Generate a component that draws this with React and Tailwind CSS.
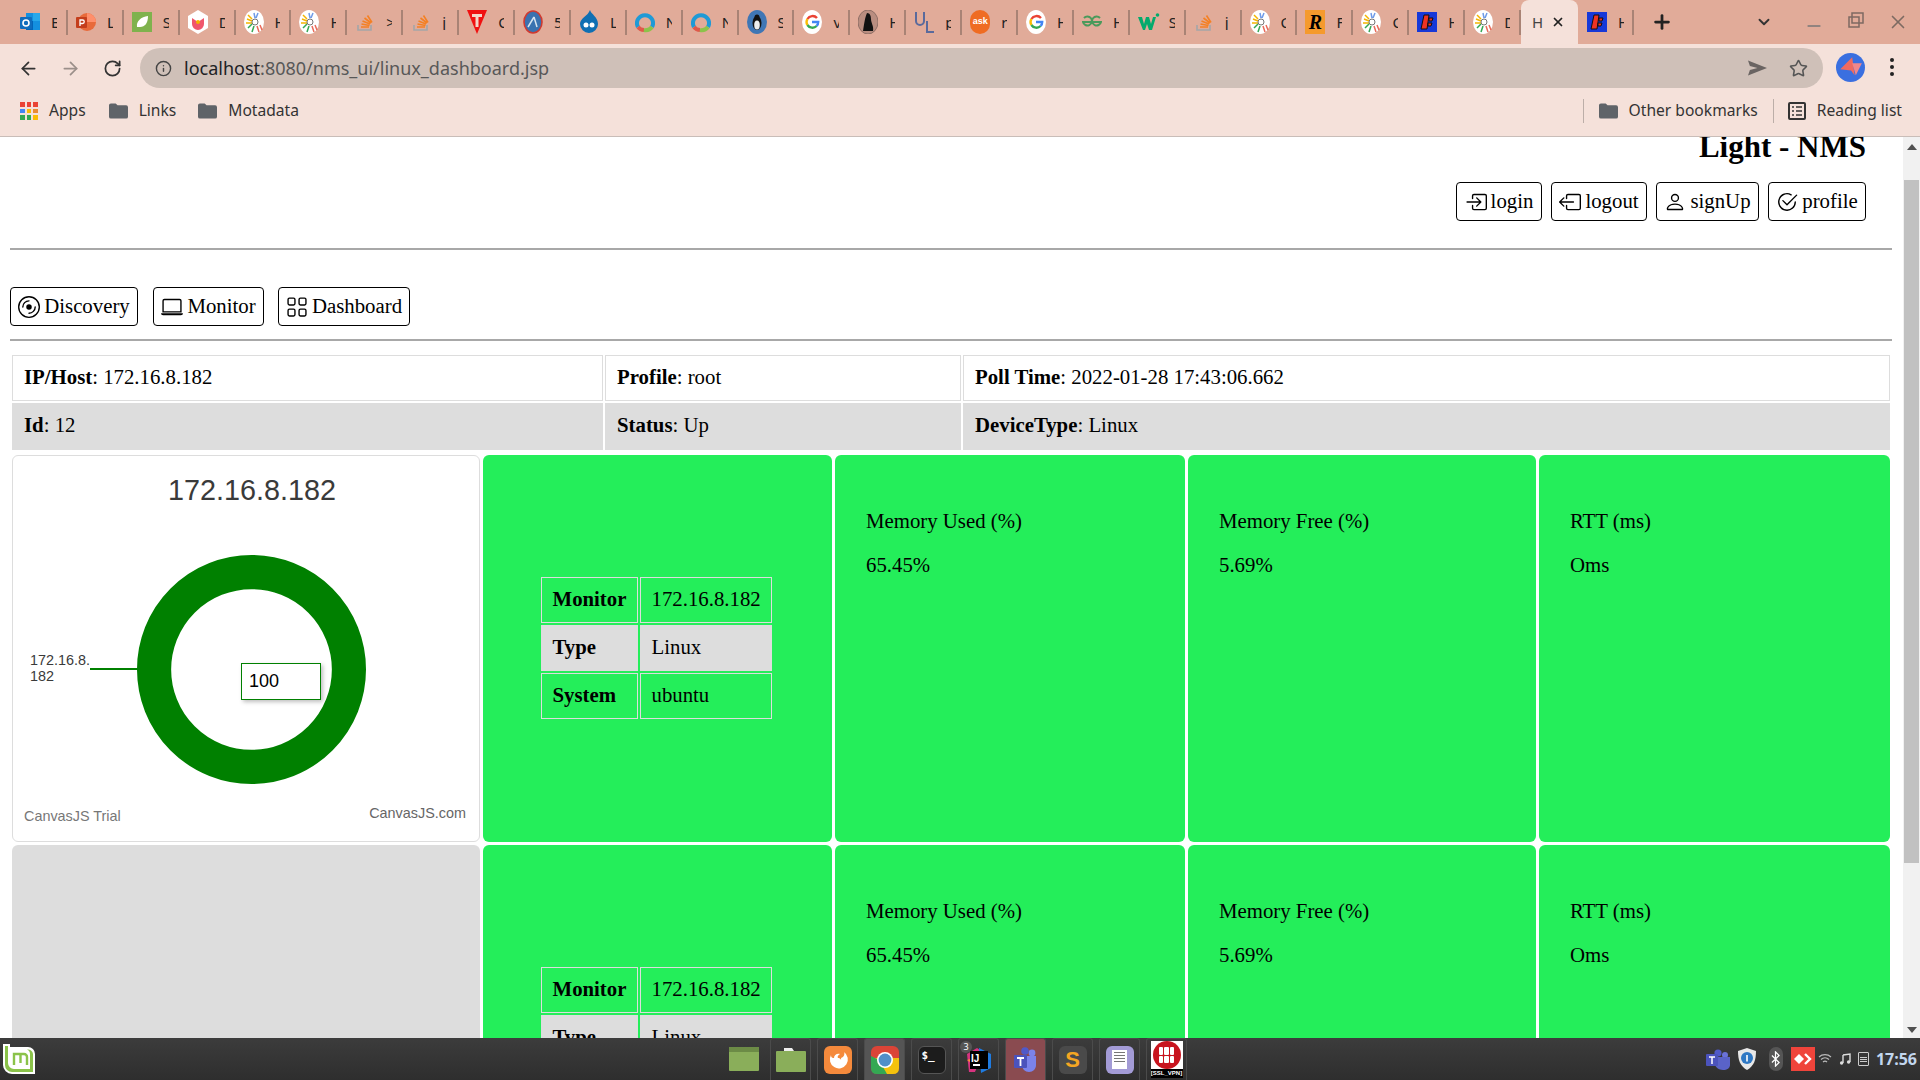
import React from "react";
import { ArrowLeft, ArrowRight, RotateCw, Info, Star, Plus, X, ChevronDown, Minus } from "lucide-react";
import { BsBoxArrowInRight, BsBoxArrowLeft, BsPerson, BsCheck2Circle, BsDisc, BsLaptop, BsGrid } from "react-icons/bs";

const SERIF = "font-['Liberation_Serif',serif]";

// little favicon drawings for the tab strip
const Colorful = () => (
  <svg viewBox="0 0 20 24" className="w-5 h-6">
    <ellipse cx="10" cy="12" rx="10" ry="12" fill="#fff" />
    <path d="M3 9l5 2M4 5l4 4M2 13h6" stroke="#f4b400" strokeWidth="1.5" />
    <path d="M10 3l1 5M14 3l-2 5" stroke="#6f9be8" strokeWidth="1.5" />
    <path d="M4 18l4-4M8 22l2-6" stroke="#34a853" strokeWidth="1.5" />
    <path d="M13 16l2 6M16 15l2 5" stroke="#ea6a5a" strokeWidth="1.5" />
    <circle cx="11" cy="12" r="3" fill="none" stroke="#777" strokeWidth="1" />
  </svg>
);
const Overflow = () => (
  <svg viewBox="0 0 20 20" className="w-5 h-5">
    <path d="M3 13v5h13v-5" fill="none" stroke="#a4a6a8" strokeWidth="1.6" />
    <path d="M6 15h8M6.5 12l8 1.5M7.5 9l7.5 3M9.5 6l6.5 5M12.5 3.5l4.5 7" stroke="#f48024" strokeWidth="1.6" />
  </svg>
);
const Google = () => (
  <svg viewBox="0 0 20 24" className="w-5 h-6">
    <ellipse cx="10" cy="12" rx="10" ry="12" fill="#fff" />
    <path d="M15 8a6 6 0 0 0-9.6 1" fill="none" stroke="#ea4335" strokeWidth="2.4" />
    <path d="M5.4 9a6 6 0 0 0 0 6" fill="none" stroke="#fbbc05" strokeWidth="2.4" />
    <path d="M5.4 15a6 6 0 0 0 9.2 1" fill="none" stroke="#34a853" strokeWidth="2.4" />
    <path d="M14.6 16c1-1 1.6-2 1.6-4H10" fill="none" stroke="#4285f4" strokeWidth="2.4" />
  </svg>
);
const Ring = () => (
  <svg viewBox="0 0 20 24" className="w-5 h-6">
    <path d="M3 17a8 8 0 1 1 14 0" fill="none" stroke="#1f9ad6" strokeWidth="4" />
    <path d="M3 17a8 8 0 0 0 6 3" fill="none" stroke="#e0584a" strokeWidth="4" />
    <path d="M9 20a8 8 0 0 0 8-3" fill="none" stroke="#8bc34a" strokeWidth="4" />
  </svg>
);
const FBlue = () => (
  <svg viewBox="0 0 20 20" className="w-5 h-5">
    <rect width="20" height="20" fill="#1738d8" />
    <path d="M7 3h5l-2 14H4z" fill="#ef3322" stroke="#111" />
    <path d="M12 6h4l-1 3h-3zM11 11h4l-1 3h-3z" fill="#ef3322" stroke="#111" />
  </svg>
);

const favicons = {
  outlook: () => (
    <svg viewBox="0 0 20 20" className="w-5 h-5">
      <rect x="6" y="1" width="14" height="17" fill="#1490df" />
      <rect x="13" y="1" width="7" height="8" fill="#28a8ea" />
      <rect x="6" y="9" width="7" height="9" fill="#0364b8" />
      <rect y="5" width="12" height="12" rx="1" fill="#0f6cbd" />
      <circle cx="6" cy="11" r="3" fill="none" stroke="#fff" strokeWidth="1.6" />
    </svg>
  ),
  ppt: () => (
    <svg viewBox="0 0 20 20" className="w-5 h-5">
      <circle cx="11" cy="10" r="9" fill="#e86a3a" />
      <path d="M11 1a9 9 0 0 1 9 9h-9z" fill="#ff8f6b" />
      <rect y="5" width="11" height="11" rx="1" fill="#c43e1c" />
      <path d="M4 14V8h2.5a1.7 1.7 0 0 1 0 3.5H4" fill="none" stroke="#fff" strokeWidth="1.3" />
    </svg>
  ),
  leaf: () => (
    <svg viewBox="0 0 20 20" className="w-5 h-5">
      <rect width="20" height="20" fill="#6db33f" opacity=".85" />
      <path d="M5 15C4 9 9 5 16 4c0 7-3 11-8 11z" fill="#fff" />
    </svg>
  ),
  hex: () => (
    <svg viewBox="0 0 20 24" className="w-5 h-6">
      <path d="M10 0l10 6v12l-10 6-10-6V6z" fill="#fff" />
      <path d="M4 8l6 4 6-4v6a6 6 0 0 1-12 0z" fill="#f0566c" />
      <circle cx="10" cy="12" r="2" fill="#f4b400" />
    </svg>
  ),
  colorful: Colorful,
  so: Overflow,
  t: () => (
    <svg viewBox="0 0 20 24" className="w-5 h-6">
      <path d="M0 0h20L10 24z" fill="#f01010" />
      <path d="M5 4h10v3h-3.5v10h-3V7H5z" fill="#f3d6c8" />
    </svg>
  ),
  circle: () => (
    <svg viewBox="0 0 20 24" className="w-5 h-6">
      <ellipse cx="10" cy="12" rx="9" ry="11" fill="#3a72b0" stroke="#d03a30" strokeWidth="1.6" />
      <path d="M5 17l6-10M11 7l3 10" stroke="#d7e4ef" strokeWidth="1.5" />
    </svg>
  ),
  drupal: () => (
    <svg viewBox="0 0 20 24" className="w-5 h-6">
      <path d="M11 0c1 4 8 7 8 14a9 9 0 0 1-18 0C1 8 9 6 11 0z" fill="#0f6fb3" />
      <circle cx="7" cy="15" r="2.5" fill="#fff" />
      <circle cx="13" cy="15" r="2.5" fill="#fff" />
    </svg>
  ),
  ring: Ring,
  penguin: () => (
    <svg viewBox="0 0 20 24" className="w-5 h-6">
      <ellipse cx="10" cy="12" rx="10" ry="12" fill="#3f76b5" />
      <ellipse cx="10" cy="13" rx="4.5" ry="7" fill="#111" />
      <ellipse cx="10" cy="15" rx="2.8" ry="4.5" fill="#eee" />
      <circle cx="10" cy="7" r="2.5" fill="#111" />
    </svg>
  ),
  google: Google,
  tux: () => (
    <svg viewBox="0 0 20 24" className="w-5 h-6">
      <ellipse cx="10" cy="12" rx="10" ry="12" fill="#b98d80" stroke="#8f6f66" />
      <path d="M9 3c3 0 4 3 4 6 0 4 3 7 2 12H5c1-6 2-14 4-18z" fill="#111" />
    </svg>
  ),
  ul: () => (
    <svg viewBox="0 0 22 24" className="w-[22px] h-6">
      <path d="M2 2v9a4 4 0 0 0 8 0V2" fill="none" stroke="#5a6a9c" strokeWidth="2" />
      <path d="M13 11v11h7" fill="none" stroke="#5a6a9c" strokeWidth="2" />
    </svg>
  ),
  ask: () => (
    <div className="w-5 h-6 rounded-full bg-[#ef6c23] text-white text-[9px] font-bold flex items-center justify-center font-['Liberation_Sans',sans-serif]">ask</div>
  ),
  gfg: () => (
    <svg viewBox="0 0 20 20" className="w-5 h-5">
      <path d="M10 10h9a4.5 4.5 0 1 1-1-4M10 10H1a4.5 4.5 0 1 0 1-4" fill="none" stroke="#4a9a5b" strokeWidth="2" />
    </svg>
  ),
  w3: () => (
    <svg viewBox="0 0 22 20" className="w-[22px] h-5">
      <path d="M0 5h4l2 7 2-7h3l2 7 2-7h3l-4 13h-3l-2-6-2 6H5z" fill="#04aa6d" />
      <circle cx="19.5" cy="3" r="1.8" fill="#04aa6d" />
    </svg>
  ),
  r: () => (
    <div className="w-5 h-6 bg-[#f59a2d] text-black text-[20px] italic font-bold leading-6 text-center font-['Liberation_Serif',serif]">R</div>
  ),
  f: FBlue,
};

const tabs = [
  ["outlook", "E"], ["ppt", "L"], ["leaf", "S"], ["hex", "D"], ["colorful", "H"], ["colorful", "H"],
  ["so", ">"], ["so", "j"], ["t", "C"], ["circle", "5"], ["drupal", "L"], ["ring", "N"], ["ring", "N"],
  ["penguin", "S"], ["google", "v"], ["tux", "H"], ["ul", "p"], ["ask", "r"], ["google", "H"],
  ["gfg", "H"], ["w3", "S"], ["so", "j"], ["colorful", "C"], ["r", "F"], ["colorful", "C"], ["f", "H"], ["colorful", "D"],
];

const Tab = ({ kind, letter }) => {
  const Icon = favicons[kind];
  return (
    <div className="w-[55.9px] h-[25px] shrink-0 flex items-center pl-2 pr-[9px] border-r-2 border-[#a98375]">
      <div className="w-6 shrink-0 flex justify-start"><Icon /></div>
      <span className="ml-[7px] w-[11px] overflow-hidden text-[15px] text-[#222] leading-none">{letter}</span>
    </div>
  );
};

const Folder = ({ className = "" }) => (
  <svg viewBox="0 0 20 16" className={"w-[19px] h-[16px] " + className}>
    <path d="M0 2a2 2 0 0 1 2-2h5l2 2h9a2 2 0 0 1 2 2v10a2 2 0 0 1-2 2H2a2 2 0 0 1-2-2z" fill="#5f6368" />
  </svg>
);

const Bookmark = ({ children, icon }) => (
  <div className="flex items-center gap-[11px]">
    {icon}
    <span>{children}</span>
  </div>
);

const AppsIcon = () => {
  const colors = ["#ea4335", "#ea4335", "#ea4335", "#4285f4", "#fbbc05", "#ea8a35", "#34a853", "#34a853", "#fbbc05"];
  return (
    <div className="grid grid-cols-3 gap-[2px] w-[18px]">
      {colors.map((c, i) => (
        <div key={i} className="w-[4.6px] h-[4.6px]" style={{ backgroundColor: c }} />
      ))}
    </div>
  );
};

const OutlineButton = ({ icon, children, className = "" }) => (
  <button className={"h-[39px] flex items-center justify-center gap-[4px] border border-black rounded-[4px] text-[20.8px] text-black leading-none " + className}>
    {icon}
    {children}
  </button>
);

const InfoCell = ({ label, value, className = "" }) => (
  <td className={"px-[11px] border border-[#dddddd] text-[20.8px] text-black " + className}>
    <b>{label}</b>: {value}
  </td>
);

const MiniTable = () => (
  <table className="border-separate border-spacing-[2px] text-[20.8px] text-black -ml-[2px]">
    <tbody>
      <tr>
        <td className="w-[97px] h-[46px] px-[10.5px] pb-[2px] border border-[#dddddd] font-bold">Monitor</td>
        <td className="w-[132px] h-[46px] px-[10.5px] pb-[2px] border border-[#dddddd]">172.16.8.182</td>
      </tr>
      <tr className="bg-[#dddddd]">
        <td className="h-[46px] px-[10.5px] pb-[2px] border border-[#dddddd] font-bold">Type</td>
        <td className="h-[46px] px-[10.5px] pb-[2px] border border-[#dddddd]">Linux</td>
      </tr>
      <tr>
        <td className="h-[46px] px-[10.5px] pb-[2px] border border-[#dddddd] font-bold">System</td>
        <td className="h-[46px] px-[10.5px] pb-[2px] border border-[#dddddd]">ubuntu</td>
      </tr>
    </tbody>
  </table>
);

const DeviceCard = () => (
  <div className="bg-[#24ee5a] rounded-md h-[387px] pl-[58px] pt-[120px]">
    <MiniTable />
  </div>
);

const MetricCard = ({ title, value }) => (
  <div className="bg-[#24ee5a] rounded-md h-[387px] pl-[31px] pt-[54px] text-[20.8px] leading-[24px] text-black">
    <p className="mb-[20px]">{title}</p>
    <p>{value}</p>
  </div>
);

const ChartCard = () => (
  <div className="relative h-[387px] bg-white border border-[#dddddd] rounded-md font-['Liberation_Sans',sans-serif] overflow-hidden">
    <div className="text-center text-[28.8px] leading-8 text-[#3a3a3a] pt-[18px] w-[478px]">172.16.8.182</div>
    <svg viewBox="0 0 228 228" className="absolute left-[124px] top-[99px] w-[229px] h-[229px]">
      <circle cx="114" cy="114" r="97" fill="none" stroke="#008000" strokeWidth="34" />
    </svg>
    <div className="absolute left-[77px] top-[212px] w-[48px] h-[2px] bg-[#008000]" />
    <div className="absolute left-[17px] top-[196px] text-[14.4px] leading-4 text-[#3a3a3a]">172.16.8.<br />182</div>
    <div className="absolute left-[228px] top-[207px] w-[80px] h-[37px] bg-white border border-[#008000] shadow-[2px_2px_4px_rgba(0,0,0,0.25)] pl-[7px] text-[18px] leading-[34px] text-black">100</div>
    <div className="absolute left-[11px] top-[352px] text-[14.4px] leading-4 text-[#777777]">CanvasJS Trial</div>
    <div className="absolute right-[13px] top-[349px] text-[14.4px] leading-4 text-[#666666]">CanvasJS.com</div>
  </div>
);

const DeviceRow = ({ chart }) => (
  <>
    {chart ? <ChartCard /> : <div className="bg-[#dddddd] rounded-md h-[387px]" />}
    <DeviceCard />
    <MetricCard title="Memory Used (%)" value="65.45%" />
    <MetricCard title="Memory Free (%)" value="5.69%" />
    <MetricCard title="RTT (ms)" value="Oms" />
  </>
);

const DockItem = ({ children, className = "" }) => (
  <div className={"w-[41px] h-[42px] flex items-center justify-center border border-[#4b4b4b] border-b-0 rounded-t-[3px] " + className}>
    {children}
  </div>
);

const GreenFolder = ({ tab }) => (
  <svg viewBox="0 0 30 24" className="w-[30px] h-6">
    {tab && <path d="M8 0h8l2 3H8z" fill="#eee" />}
    <rect y={tab ? 3 : 0} width="30" height={tab ? 21 : 24} rx="1" fill="#8aae5a" />
    {!tab && <rect width="30" height="5" fill="#6c8b46" />}
  </svg>
);

const Dock = () => (
  <div className="flex gap-[6px] ml-[688px]">
    <div className="w-[41px] h-[42px] flex items-center justify-center"><GreenFolder /></div>
    <DockItem><GreenFolder tab /></DockItem>
    <DockItem>
      <svg viewBox="0 0 28 28" className="w-7 h-7">
        <rect width="28" height="28" rx="6" fill="#f58a3c" />
        <path d="M20 6a9 9 0 1 1-13 3c0 3 2 3 3 3 0-3 3-5 6-4-2 1-3 3-2 4 2 0 4 2 3 4s-5 2-6 0c3 1 7-1 6-4 3-1 4-4 3-6z" fill="#fff" />
      </svg>
    </DockItem>
    <DockItem className="bg-[#555555]">
      <svg viewBox="0 0 28 28" className="w-7 h-7">
        <rect width="28" height="28" rx="6" fill="#db4437" />
        <path d="M0 12L10 28h12q6 0 6-6V12z" fill="#f4c20d" />
        <path d="M0 10v12q0 6 6 6h10L8 14z" fill="#34a853" />
        <circle cx="14" cy="14" r="8" fill="#fff" />
        <circle cx="14" cy="14" r="6.4" fill="#4f8fc9" />
      </svg>
    </DockItem>
    <DockItem>
      <div className="w-7 h-7 rounded-md bg-[#1c1c1c] border border-[#555] text-white text-[11px] font-bold leading-none pt-[3px] pl-[3px] font-['DejaVu_Sans_Mono',monospace]">$_</div>
    </DockItem>
    <DockItem className="relative">
      <svg viewBox="0 0 28 28" className="w-7 h-7">
        <path d="M2 8l10-6 6 4-8 20H4z" fill="#d6337f" />
        <path d="M14 2l12 6v14l-10 5z" fill="#1f7be0" />
        <path d="M2 14l6-2 2 8z" fill="#f58a3c" />
        <rect x="5" y="5" width="18" height="18" fill="#000" />
        <rect x="8" y="18" width="7" height="2" fill="#fff" />
      </svg>
      <span className="absolute left-[12px] top-[12px] text-white text-[10px] font-bold font-['Liberation_Sans',sans-serif]">IJ</span>
      <span className="absolute left-[1px] top-[2px] w-3 h-3 rounded-full bg-[#555] text-white text-[9px] leading-3 text-center">3</span>
    </DockItem>
    <DockItem className="bg-[#8a4b50]">
      <svg viewBox="0 0 28 28" className="w-7 h-7">
        <circle cx="20" cy="7" r="3.4" fill="#7b83eb" />
        <circle cx="13" cy="5" r="3.8" fill="#5059c9" />
        <path d="M10 10h14v9c0 4-3 7-7 7s-7-3-7-7z" fill="#7b83eb" />
        <rect x="2" y="9" width="13" height="13" rx="1" fill="#4b53bc" />
        <path d="M5 12h7M8.5 12v8" stroke="#fff" strokeWidth="1.8" />
      </svg>
    </DockItem>
    <DockItem>
      <div className="w-7 h-7 rounded-md bg-[#4a4a4a] text-[#f5a623] text-[22px] font-bold leading-7 text-center font-['Liberation_Sans',sans-serif]">S</div>
    </DockItem>
    <DockItem>
      <div className="w-7 h-7 rounded-md bg-[#a39bd6] flex items-center justify-center">
        <div className="w-[15px] h-[19px] bg-white flex flex-col gap-[2px] p-[2px]">
          <div className="h-px bg-[#777]" /><div className="h-px bg-[#777]" /><div className="h-px bg-[#777]" /><div className="h-px bg-[#777]" />
        </div>
      </div>
    </DockItem>
    <DockItem>
      <div className="w-8 h-[37px] bg-white flex flex-col items-center overflow-hidden">
        <div className="w-7 h-7 rounded-full bg-[#c8141e] grid grid-cols-3 gap-px p-[6px] shrink-0">
          {[0, 1, 2, 3, 4, 5].map((i) => <div key={i} className="bg-white rounded-[1px]" />)}
        </div>
        <div className="w-8 bg-black text-white text-[6px] font-bold leading-[9px] text-center font-['Liberation_Sans',sans-serif]">[SSL_VPN]</div>
      </div>
    </DockItem>
  </div>
);

const Tray = () => (
  <div className="ml-auto flex items-center h-full">
    <svg viewBox="0 0 24 24" className="w-6 h-6">
      <circle cx="19" cy="8" r="3" fill="#6a72d8" />
      <circle cx="12" cy="6" r="3.6" fill="#5059c9" />
      <path d="M9 10h15v8c0 3-3 5-7 5s-8-3-8-6z" fill="#5a63c8" />
      <rect y="7" width="12" height="12" rx="1" fill="#4b53bc" />
      <path d="M3 10h6M6 10v7" stroke="#fff" strokeWidth="1.5" />
    </svg>
    <svg viewBox="0 0 20 24" className="w-5 h-6 ml-[7px]">
      <path d="M10 1l9 3c0 9-2 15-9 19C3 19 1 13 1 4z" fill="#e8e8e8" />
      <circle cx="10" cy="11" r="6" fill="#2f78c4" />
      <rect x="9.2" y="8" width="1.6" height="6.5" fill="#fff" />
    </svg>
    <div className="ml-[12px] w-[14px] h-[24px] rounded-full bg-[#555] flex items-center justify-center">
      <svg viewBox="0 0 10 18" className="w-[9px] h-4">
        <path d="M1 5l8 8-4 4V1l4 4-8 8" fill="none" stroke="#fff" strokeWidth="1.4" />
      </svg>
    </div>
    <div className="ml-[8px] w-6 h-6 bg-[#ef443b] flex items-center justify-center">
      <svg viewBox="0 0 20 12" className="w-5 h-3">
        <path d="M6 1l5 5-5 5-5-5z" fill="#fff" />
        <path d="M12 1l5 5-5 5" fill="none" stroke="#fff" strokeWidth="2.4" />
      </svg>
    </div>
    <svg viewBox="0 0 14 12" className="w-[14px] h-3 ml-[3px]">
      <path d="M1 4a9 9 0 0 1 12 0M3 6.5a6 6 0 0 1 8 0M5 9a3 3 0 0 1 4 0" fill="none" stroke="#bbb" strokeWidth="1.2" />
    </svg>
    <svg viewBox="0 0 12 12" className="w-3 h-3 ml-[7px]">
      <path d="M4 2l7-1v8M4 2v8" fill="none" stroke="#ddd" strokeWidth="1.4" />
      <circle cx="2.6" cy="10" r="1.7" fill="#ddd" />
      <circle cx="9.6" cy="9" r="1.7" fill="#ddd" />
    </svg>
    <div className="ml-[7px] w-[11px] h-[14px] border border-[#ccc] rounded-[1px] flex flex-col justify-center gap-px px-px">
      <div className="h-px bg-[#ccc]" /><div className="h-px bg-[#ccc]" /><div className="h-px bg-[#ccc]" />
    </div>
    <span className="ml-[7px] mr-[3px] text-[16px] font-bold text-[#c2d6ee] font-['Noto_Sans',sans-serif]">17:56</span>
  </div>
);

export default function App() {
  return (
    <div className="w-[1920px] h-[1080px] flex flex-col overflow-hidden font-['Noto_Sans',sans-serif]">
      {/* tab strip */}
      <div className="h-[44px] shrink-0 bg-[#e1ab99] flex items-center pl-[12px]">
        {tabs.map(([kind, letter], i) => (
          <Tab key={i} kind={kind} letter={letter} />
        ))}
        <div className="self-stretch w-[57px] shrink-0 bg-[#f5e1da] rounded-t-lg flex items-center pl-[11px] gap-[8px] text-[15px] text-[#444]">
          <span>H</span>
          <X size={14} strokeWidth={3} className="text-[#222]" />
        </div>
        <div className="w-[56px] h-[25px] shrink-0 flex items-center pl-[9px] border-r-2 border-[#a98375]">
          <FBlue />
          <span className="ml-[11px] w-[6px] overflow-hidden text-[15px] text-[#222] leading-none">H</span>
        </div>
        <Plus size={22} strokeWidth={3} className="ml-[17px] text-[#222]" />
        <ChevronDown size={18} strokeWidth={2.5} className="ml-[82px] text-[#333]" />
        <Minus size={20} className="ml-[31px] mt-[8px] text-[#777]" />
        <svg viewBox="0 0 16 16" className="w-4 h-4 ml-[24px] -mt-1">
          <path d="M4 1h11v10H4zM1 5h10v10H1z" fill="none" stroke="#7d6a62" strokeWidth="1.5" />
        </svg>
        <X size={22} strokeWidth={1.8} className="ml-[23px] text-[#7d6a62]" />
      </div>

      {/* toolbar */}
      <div className="h-[49px] shrink-0 bg-[#f5e1da] flex items-start pt-[4px]">
        <div className="w-[140px] h-[40px] flex items-center text-[#333]">
          <ArrowLeft size={21} strokeWidth={2} className="ml-[18px]" />
          <ArrowRight size={21} strokeWidth={2} className="ml-[21px] text-[#9b8f8a]" />
          <RotateCw size={19} strokeWidth={2.2} className="ml-[22px]" />
        </div>
        <div className="w-[1683px] h-[40px] rounded-full bg-[#cfc0b8] flex items-center pl-[15px] text-[18px]">
          <Info size={17} className="text-[#444]" />
          <span className="ml-[12px] text-[#202124]">localhost</span>
          <span className="text-[#585858]">:8080/nms_ui/linux_dashboard.jsp</span>
          <svg viewBox="0 0 20 16" className="w-[19px] h-4 ml-auto mr-[22px] shrink-0">
            <path d="M0 0l20 8L0 16l2-6 8-2-8-2z" fill="#6a6462" />
          </svg>
          <Star size={19} className="text-[#555] mr-[15px] shrink-0" />
        </div>
        <div className="ml-[13px] w-[29px] h-[29px] mt-[5px] rounded-full bg-[#3a6fe0] flex items-center justify-center shrink-0">
          <svg viewBox="0 0 20 20" className="w-6 h-6">
            <path d="M11 1l2 15-3-4-9-1z" fill="#ef6a5f" />
            <path d="M11 6l8 0-5 10z" fill="#f0878a" />
          </svg>
        </div>
        <div className="ml-[25px] mt-[10px] flex flex-col gap-[3px]">
          <div className="w-1 h-1 rounded-full bg-[#222]" />
          <div className="w-1 h-1 rounded-full bg-[#222]" />
          <div className="w-1 h-1 rounded-full bg-[#222]" />
        </div>
      </div>

      {/* bookmarks */}
      <div className="h-[44px] shrink-0 bg-[#f5e1da] border-b border-[#c9bdb8] flex items-center pb-[7px] pl-[20px] text-[15.6px] text-[#333]">
        <Bookmark icon={<AppsIcon />}>Apps</Bookmark>
        <div className="ml-[23px]"><Bookmark icon={<Folder />}>Links</Bookmark></div>
        <div className="ml-[22px]"><Bookmark icon={<Folder />}>Motadata</Bookmark></div>
        <div className="ml-auto h-[24px] border-l border-[#bcaea8] pl-[15px] flex items-center">
          <Bookmark icon={<Folder />}>Other bookmarks</Bookmark>
        </div>
        <div className="ml-[15px] mr-[18px] h-[24px] border-l border-[#bcaea8] pl-[14px] flex items-center">
          <Bookmark
            icon={
              <svg viewBox="0 0 18 18" className="w-[18px] h-[18px]">
                <rect x="1" y="1" width="16" height="16" rx="1" fill="none" stroke="#333" strokeWidth="2" />
                <path d="M4 5h2M8 5h6M4 9h2M8 9h6M4 13h2M8 13h6" stroke="#333" strokeWidth="1.6" />
              </svg>
            }
          >
            Reading list
          </Bookmark>
        </div>
      </div>

      {/* page area */}
      <div className="flex-1 min-h-0 flex bg-white">
        <div className={"w-[1903px] overflow-hidden pl-[10px] pr-[11px] " + SERIF}>
          <h2 className="-mt-[9px] pr-[26px] text-[31px] leading-[37px] font-bold text-right text-black">Light - NMS</h2>
          <div className="mt-[17px] pr-[26px] flex justify-end gap-[9px]">
            <OutlineButton className="w-[86px]" icon={<BsBoxArrowInRight size={22} />}>login</OutlineButton>
            <OutlineButton className="w-[96px]" icon={<BsBoxArrowLeft size={22} />}>logout</OutlineButton>
            <OutlineButton className="w-[103px]" icon={<BsPerson size={22} />}>signUp</OutlineButton>
            <OutlineButton className="w-[98px]" icon={<BsCheck2Circle size={22} />}>profile</OutlineButton>
          </div>
          <hr className="mt-[27px] border-t-[2px] border-[#a8a8a8]" />
          <div className="mt-[37px] flex">
            <OutlineButton className="w-[128px]" icon={<BsDisc size={22} />}>Discovery</OutlineButton>
            <OutlineButton className="w-[111px] ml-[15px]" icon={<BsLaptop size={22} />}>Monitor</OutlineButton>
            <OutlineButton className="w-[132px] ml-[14px]" icon={<BsGrid size={22} />}>Dashboard</OutlineButton>
          </div>
          <hr className="mt-[13px] border-t-[2px] border-[#a8a8a8]" />

          <table className="mt-[12px] w-[1882px] table-fixed border-separate border-spacing-[2px]">
            <colgroup>
              <col className="w-[591px]" />
              <col className="w-[356px]" />
              <col />
            </colgroup>
            <tbody>
              <tr className="h-[46px]">
                <InfoCell label="IP/Host" value="172.16.8.182" className="pb-[2px]" />
                <InfoCell label="Profile" value="root" className="pb-[2px]" />
                <InfoCell label="Poll Time" value="2022-01-28 17:43:06.662" className="pb-[2px]" />
              </tr>
              <tr className="h-[47px] bg-[#dddddd]">
                <InfoCell label="Id" value="12" className="pb-[4px]" />
                <InfoCell label="Status" value="Up" className="pb-[4px]" />
                <InfoCell label="DeviceType" value="Linux" className="pb-[4px]" />
              </tr>
            </tbody>
          </table>

          <div className="mt-[3px] ml-[2px] w-[1878px] grid grid-cols-[468px_349px_350px_348px_351px] gap-[3px]">
            <DeviceRow chart />
            <DeviceRow />
          </div>
        </div>

        {/* scrollbar */}
        <div className="w-[17px] bg-[#f1f1f1] flex flex-col items-center">
          <div className="h-[20px] shrink-0 flex items-center justify-center">
            <div className="w-0 h-0 border-x-[5px] border-x-transparent border-b-[6px] border-b-[#505050]" />
          </div>
          <div className="mt-[23px] w-[15px] h-[683px] bg-[#c1c1c1]" />
          <div className="mt-auto h-[17px] flex items-center justify-center">
            <div className="w-0 h-0 border-x-[5px] border-x-transparent border-t-[6px] border-t-[#505050]" />
          </div>
        </div>
      </div>

      {/* desktop panel */}
      <div className="h-[42px] shrink-0 bg-gradient-to-b from-[#3c3c3c] to-[#2e2e2e] flex items-center pl-[3px]">
        <svg viewBox="0 0 32 30" className="w-8 h-[30px] shrink-0">
          <path d="M0 0h7v3h18a7 7 0 0 1 7 7v20H9a9 9 0 0 1-9-9z" fill="#fff" />
          <path d="M2 2h3v17a6 6 0 0 0 6 6h16V10a5 5 0 0 0-3-4.500a5 5 0 0 1 6 4.500v18H9a7 7 0 0 1-7-7z" fill="#8bc34a" />
          <path d="M11 21V10h10a3 3 0 0 1 3 3v8M17.500 10v9" fill="none" stroke="#8bc34a" strokeWidth="2.4" />
        </svg>
        <Dock />
        <Tray />
      </div>
    </div>
  );
}
